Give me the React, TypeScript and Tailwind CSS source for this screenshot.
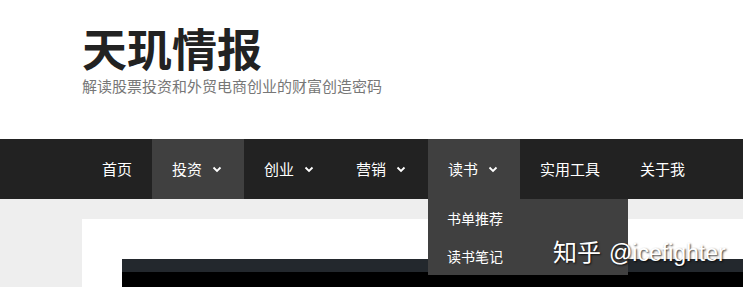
const font = { fontFamily: '"Noto Sans CJK SC", "Liberation Sans", sans-serif' };

function Chevron() {
  return (
    <svg width="10" height="7" viewBox="0 0 10 7" className="ml-[10px] mr-[2px]">
      <path d="M1.5 1.5 L5 5 L8.5 1.5" fill="none" stroke="white" strokeWidth="1.8" />
    </svg>
  );
}

const navItems = [
  { label: "首页", menu: false, active: false },
  { label: "投资", menu: true, active: true },
  { label: "创业", menu: true, active: false },
  { label: "营销", menu: true, active: false },
  { label: "读书", menu: true, active: true, open: true },
  { label: "实用工具", menu: false, active: false },
  { label: "关于我", menu: false, active: false },
];

export default function App() {
  return (
    <div className="w-[743px] h-[287px] overflow-hidden bg-[#eeeeee] relative" style={font}>
      {/* header */}
      <div className="bg-white h-[139px] pl-[82px] pt-[25px]">
        <h1 className="text-[45px] leading-[46px] font-bold text-[#222]">天玑情报</h1>
        <p className="text-[15px] leading-[18px] text-[#777] mt-[6px]">解读股票投资和外贸电商创业的财富创造密码</p>
      </div>

      {/* nav */}
      <nav className="bg-[#222222] h-[60px] pl-[82px] flex">
        {navItems.map((item) => (
          <div
            key={item.label}
            className={`relative flex items-center px-5 text-[15px] text-white ${
              item.active ? "bg-[#404040]" : ""
            }`}
          >
            <span>{item.label}</span>
            {item.menu && <Chevron />}
            {item.open && (
              <div className="absolute left-0 top-[60px] w-[200px] bg-[#404040] z-10">
                <div className="h-[38px] flex items-center pl-[19px] text-[14px] text-white">书单推荐</div>
                <div className="h-[38px] flex items-center pl-[19px] text-[14px] text-white">读书笔记</div>
              </div>
            )}
          </div>
        ))}
      </nav>

      {/* content */}
      <div className="pl-[82px] pt-[20px]">
        <div className="bg-white pl-[40px] pt-[40px] h-[200px]">
          <div className="h-[13px] bg-[#23282d]" />
          <div className="h-[100px] bg-black" />
        </div>
      </div>

      {/* watermark */}
      <div
        className="absolute left-[553px] top-[237px] z-20 flex items-baseline text-white"
        style={{ textShadow: "1px 1px 2px rgba(0,0,0,0.8)" }}
      >
        <span className="text-[24px] leading-[28px]">知乎</span>
        <span className="text-[23px] leading-[28px] ml-[8px]" style={{ fontFamily: '"Liberation Sans", sans-serif' }}>
          @icefighter
        </span>
      </div>
    </div>
  );
}
